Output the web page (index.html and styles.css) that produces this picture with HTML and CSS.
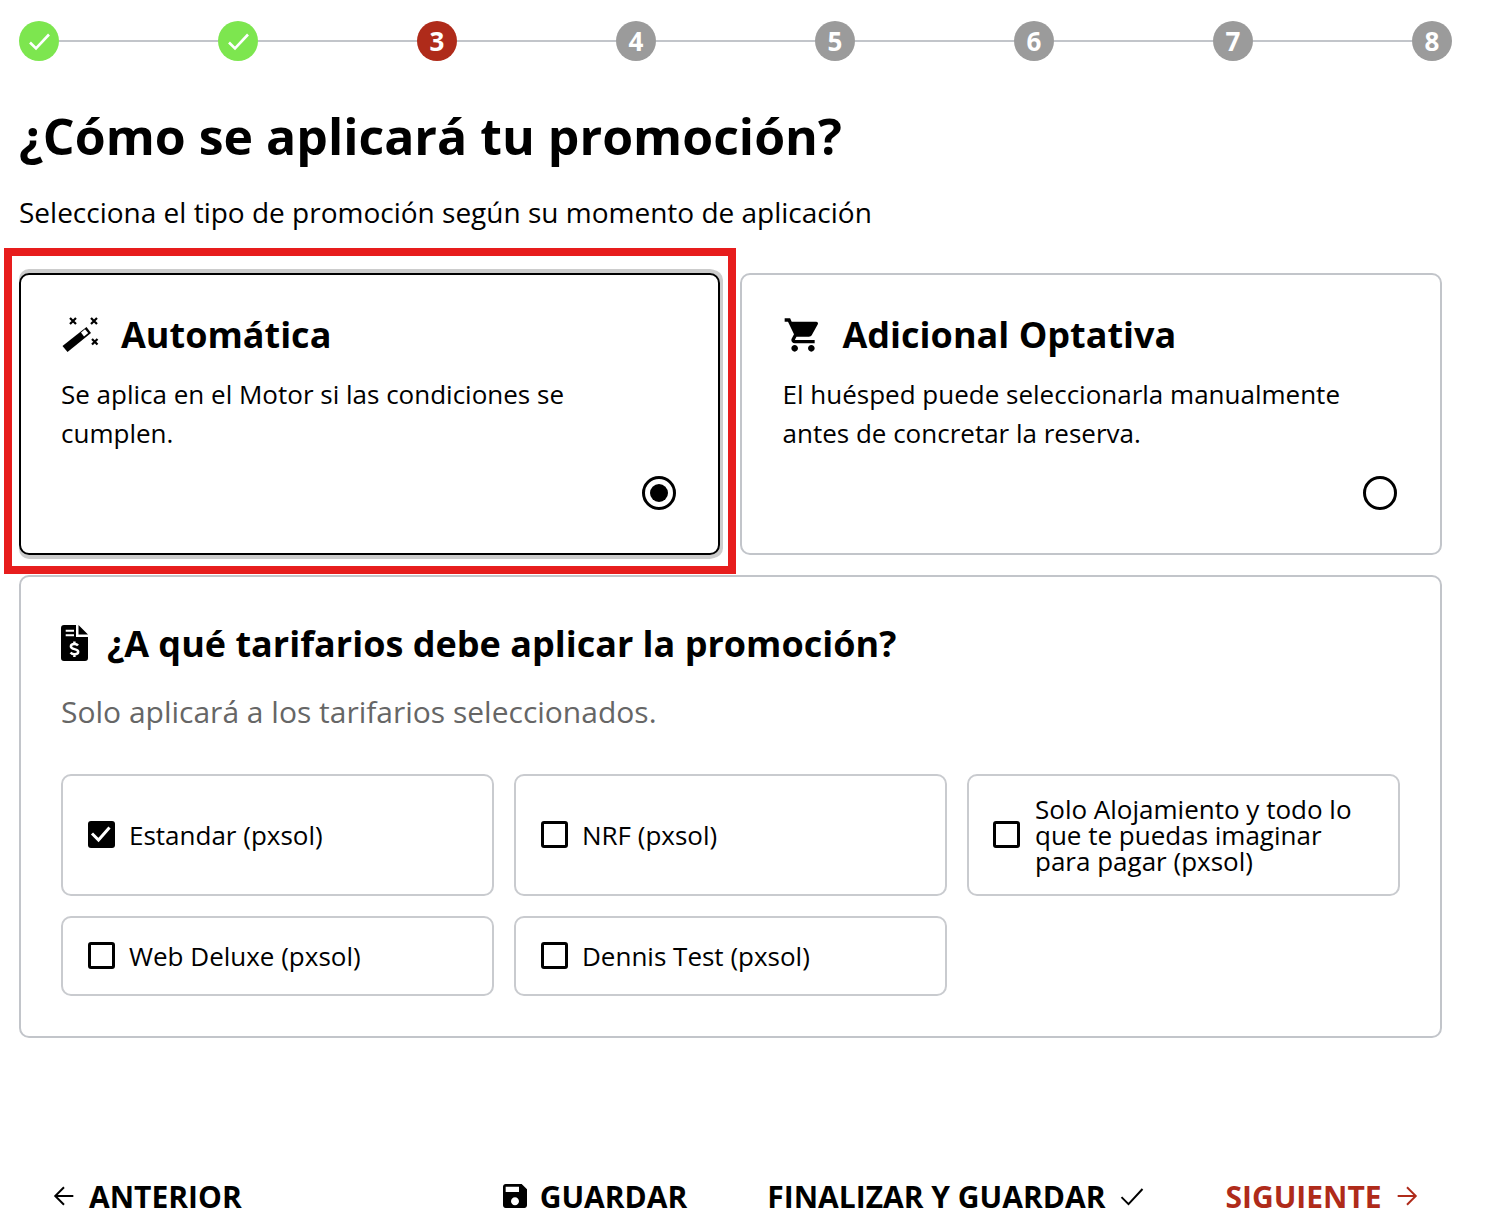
FILE: index.html
```html
<!DOCTYPE html>
<html lang="es">

<head>
  <meta charset="UTF-8">
  <meta name="viewport" content="width=device-width, initial-scale=1.0">
  <title>Promoción</title>
  <link rel="stylesheet" href="styles.css">
</head>

<body>
  <div class="page">
    <!-- pasos -->
    <div class="stepper">
      <span class="step done">
        <svg viewBox="0 0 40 40" width="40" height="40"><path d="M11 21.500l6 6L30 13.500" fill="none" stroke="#fff" stroke-width="2.600"/></svg>
      </span>
      <span class="line"></span>
      <span class="step done">
        <svg viewBox="0 0 40 40" width="40" height="40"><path d="M11 21.500l6 6L30 13.500" fill="none" stroke="#fff" stroke-width="2.600"/></svg>
      </span>
      <span class="line"></span>
      <span class="step current">3</span>
      <span class="line"></span>
      <span class="step">4</span>
      <span class="line"></span>
      <span class="step">5</span>
      <span class="line"></span>
      <span class="step">6</span>
      <span class="line"></span>
      <span class="step">7</span>
      <span class="line"></span>
      <span class="step">8</span>
    </div>

    <h1 class="title">¿Cómo se aplicará tu promoción?</h1>
    <p class="subtitle">Selecciona el tipo de promoción según su momento de aplicación</p>

    <div class="types">
      <div class="type-card selected">
        <div class="type-head">
          <svg class="type-icon" viewBox="0 0 40 40" width="40" height="40">
            <path d="M1.500 31L6.500 37 30 18 25.500 12z" fill="#000"/>
            <path d="M20 17.500l4-3.300 3.200 3.800-4.200 3.500z" fill="#fff"/>
            <path d="M9 3l6 6M15 3l-6 6M30 3l6 6M36 3l-6 6M31 24l5.500 5.500M36.500 24L31 29.500" stroke="#000" stroke-width="2.200" fill="none"/>
          </svg>
          <h2>Automática</h2>
        </div>
        <p class="type-text">Se aplica en el Motor si las condiciones se cumplen.</p>
        <span class="radio checked"></span>
      </div>
      <div class="type-card">
        <div class="type-head">
          <svg class="type-icon" viewBox="0 0 24 24" width="40" height="40">
            <path d="M7 18c-1.100 0-1.990.9-1.990 2S5.900 22 7 22s2-.9 2-2-.9-2-2-2zM1 2v2h2l3.600 7.590-1.350 2.450c-.16.28-.25.61-.25.96 0 1.100.9 2 2 2h12v-2H7.420c-.14 0-.25-.11-.25-.25l.03-.12.9-1.630h7.450c.75 0 1.410-.41 1.750-1.030l3.580-6.490c.08-.14.12-.31.12-.48 0-.55-.45-1-1-1H5.210l-.94-2H1zm16 16c-1.100 0-1.990.9-1.990 2s.89 2 1.990 2 2-.9 2-2-.9-2-2-2z"/>
          </svg>
          <h2>Adicional Optativa</h2>
        </div>
        <p class="type-text">El huésped puede seleccionarla manualmente antes de concretar la reserva.</p>
        <span class="radio"></span>
      </div>
    </div>

    <div class="rates">
      <div class="rates-head">
        <svg viewBox="0 0 27 36" width="27" height="36">
          <path d="M3 0h12v12h12v21a3 3 0 0 1-3 3H3a3 3 0 0 1-3-3V3a3 3 0 0 1 3-3zM17.500 0L27 9.500h-9.500z"/>
          <path d="M4.700 5.800h8.300M4.700 10.300h8.300" stroke="#fff" stroke-width="2"/>
          <path d="M17 20.500c-.8-1.100-2.200-1.500-3.600-1.500-2 0-3.500.9-3.500 2.500 0 3.500 7.300 1.800 7.300 5.300 0 1.600-1.600 2.500-3.700 2.500-1.600 0-3-.5-3.900-1.700M13.400 16.500v3M13.400 29v3" fill="none" stroke="#fff" stroke-width="2.500"/>
        </svg>
        <h2>¿A qué tarifarios debe aplicar la promoción?</h2>
      </div>
      <p class="rates-note">Solo aplicará a los tarifarios seleccionados.</p>
      <div class="rate-grid">
        <label class="rate">
          <span class="box checked">
            <svg viewBox="0 0 27 27" width="27" height="27"><path d="M4 12.500l6.500 6.500L21.500 6.500" fill="none" stroke="#fff" stroke-width="3"/></svg>
          </span>
          <span class="rate-name">Estandar (pxsol)</span>
        </label>
        <label class="rate">
          <span class="box"></span>
          <span class="rate-name">NRF (pxsol)</span>
        </label>
        <label class="rate long">
          <span class="box"></span>
          <span class="rate-name">Solo Alojamiento y todo lo que te puedas imaginar para pagar (pxsol)</span>
        </label>
        <label class="rate">
          <span class="box"></span>
          <span class="rate-name">Web Deluxe (pxsol)</span>
        </label>
        <label class="rate">
          <span class="box"></span>
          <span class="rate-name">Dennis Test (pxsol)</span>
        </label>
      </div>
    </div>

    <div class="actions">
      <a class="action back">
        <svg viewBox="0 0 24 24" width="28" height="28"><path d="M20 12H5M12 4.500L4.500 12l7.500 7.500" fill="none" stroke="#000" stroke-width="1.700"/></svg>
        ANTERIOR
      </a>
      <a class="action save">
        <svg viewBox="0 0 24 24" width="32" height="32"><path d="M17 3H5c-1.110 0-2 .9-2 2v14c0 1.100.89 2 2 2h14c1.100 0 2-.9 2-2V7l-4-4zm-5 16c-1.660 0-3-1.340-3-3s1.340-3 3-3 3 1.340 3 3-1.340 3-3 3zm3-10H5V5h10v4z"/></svg>
        GUARDAR
      </a>
      <a class="action finish">
        FINALIZAR Y GUARDAR
        <svg viewBox="0 0 24 24" width="28" height="28"><path d="M3 13l6 6L21 6" fill="none" stroke="#000" stroke-width="1.700"/></svg>
      </a>
      <a class="action next">
        SIGUIENTE
        <svg viewBox="0 0 24 24" width="28" height="28"><path d="M4 12h15M12 4.500l7.500 7.500-7.500 7.500" fill="none" stroke="#af2b1a" stroke-width="1.700"/></svg>
      </a>
    </div>

    <!-- marca roja sobre la primera tarjeta -->
    <div class="highlight"></div>
  </div>
</body>

</html>
```

FILE: styles.css
```css
* {
  box-sizing: border-box;
}

html,
body {
  margin: 0;
  height: 100%;
}

body {
  font-family: 'Open Sans', sans-serif;
  color: #000;
  background: #fff;
  overflow: hidden;
}

.page {
  position: relative;
  width: 1486px;
  height: 1232px;
  padding: 21px 44px 0 19px;
  overflow: hidden;
}

/* stepper */
.stepper {
  display: flex;
  align-items: center;
  width: 1433px;
}

.step {
  flex: none;
  display: flex;
  align-items: center;
  justify-content: center;
  width: 40px;
  height: 40px;
  border-radius: 50%;
  background: #9b9b9b;
  color: #fff;
  font-size: 26px;
  font-weight: 700;
}

.step.done {
  background: #7de64f;
}

.step.current {
  background: #af2b1a;
}

.line {
  flex: 1;
  height: 2px;
  background: #c2c5ca;
}

/* header */
.title {
  margin: 39px 0 0;
  font-size: 50px;
  line-height: 72px;
  font-weight: 700;
}

.subtitle {
  margin: 21px 0 0;
  font-size: 28px;
  line-height: 38px;
}

/* type cards */
.types {
  display: grid;
  grid-template-columns: 701px 702px;
  gap: 20px;
  margin-top: 42px;
}

.type-card {
  position: relative;
  height: 282px;
  padding: 40px 40px 0;
  border: 2px solid #c2c5ca;
  border-radius: 10px;
}

.type-card + .type-card {
  padding-left: 40.5px;
}

.type-card.selected {
  border-color: #000;
  box-shadow: 3px 0 0 #ccc, 0 -4px 0 #ccc, 0 4px 0 #ccc, 3px 3px 0 #ccc, 3px -3px 0 #ccc;
}

.type-head {
  display: flex;
  align-items: center;
  gap: 20px;
  height: 40px;
}

.type-head h2 {
  margin: 0;
  font-size: 36px;
  line-height: 40px;
  font-weight: 700;
}

.type-text {
  margin: 20px 0 0;
  font-size: 26px;
  line-height: 39px;
}

.radio {
  position: absolute;
  right: 43px;
  bottom: 43px;
  width: 34px;
  height: 34px;
  border: 3px solid #000;
  border-radius: 50%;
}

.radio.checked {
  right: 42px;
}

.radio.checked::after {
  content: "";
  position: absolute;
  inset: 5px;
  border-radius: 50%;
  background: #000;
}

/* rates */
.rates {
  margin-top: 20px;
  height: 463px;
  padding: 40px;
  border: 2px solid #c2c5ca;
  border-radius: 10px;
}

.rates-head {
  display: flex;
  align-items: center;
  gap: 19px;
  height: 54px;
}

.rates-head svg {
  margin-bottom: 2px;
}

.rates-head h2 {
  margin: 0;
  font-size: 36px;
  line-height: 54px;
  font-weight: 700;
}

.rates-note {
  margin: 19px 0 0;
  font-size: 30px;
  line-height: 44px;
  color: #666;
}

.rate-grid {
  display: grid;
  grid-template-columns: repeat(3, 433px);
  grid-template-rows: 122px 80px;
  gap: 20px;
  margin-top: 40px;
}

.rate {
  display: flex;
  align-items: center;
  gap: 14px;
  padding: 0 25px;
  border: 2px solid #c9cbcf;
  border-radius: 10px;
}

.rate.long {
  gap: 15px;
  padding-left: 24px;
}

.box {
  flex: none;
  width: 27px;
  height: 27px;
  margin-top: -1px;
  border: 3px solid #000;
  border-radius: 3px;
}

.box.checked {
  border: none;
  background: #000;
}

.box svg {
  display: block;
}

.rate-name {
  font-size: 26px;
  line-height: 26px;
}

/* footer buttons */
.actions {
  position: relative;
  display: flex;
  align-items: center;
  height: 44px;
  margin-top: 136px;
  margin-left: 31px;
}

.action {
  display: flex;
  align-items: center;
  gap: 11px;
  font-size: 30px;
  font-weight: 700;
}

.save {
  margin-left: 257px;
  gap: 9px;
}

.finish {
  margin-left: 80px;
  gap: 13px;
}

.next {
  margin-left: 79px;
  gap: 11px;
  color: #af2b1a;
}

/* red annotation */
.highlight {
  position: absolute;
  left: 4px;
  top: 248px;
  width: 732px;
  height: 326px;
  border: 8px solid #e71d1d;
  pointer-events: none;
}
```
